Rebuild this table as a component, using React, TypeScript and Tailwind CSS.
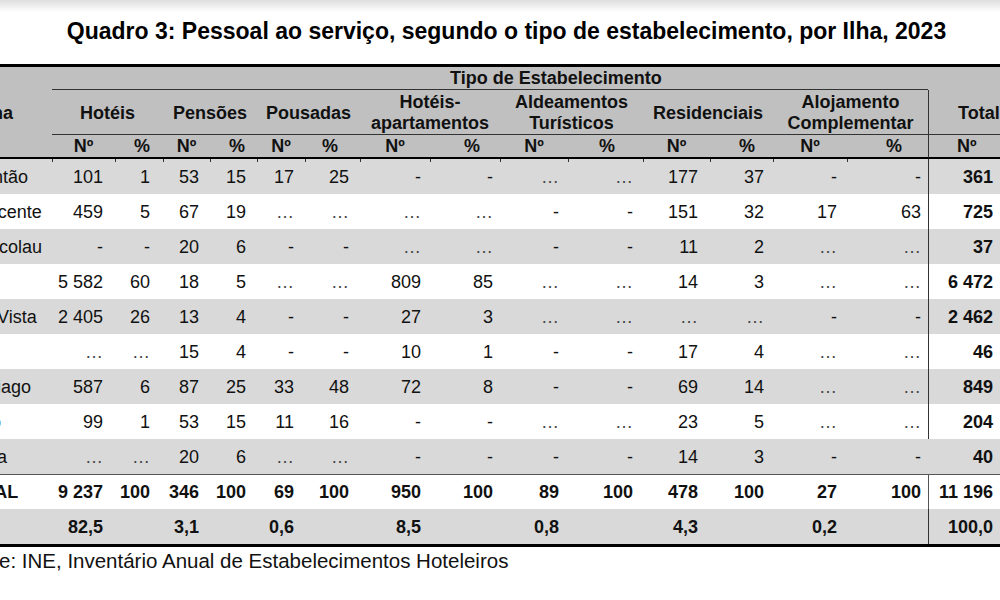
import React from 'react';

// column padding for data cells (right aligned), one entry per column after "Ilha"
const dataPad = [
  'pr-[12px]', 'pr-[13px]', 'pr-[11px]', 'pr-[11px]', 'pr-[11px]', 'pr-[11px]', 'pr-[9px]',
  'pr-[7px]', 'pr-[9px]', 'pr-[10px]', 'pr-[12px]', 'pr-[9px]', 'pr-[10px]', 'pr-[7px]',
];

// "%" header cells sit a bit left of the figures under them
const pctPad = ['pr-[13px]', 'pr-[12px]', 'pr-[22px]', 'pr-[20px]', 'pr-[28px]', 'pr-[18px]', 'pr-[26px]'];

const groups: { label: string; two?: boolean }[] = [
  { label: 'Hotéis' },
  { label: 'Pensões' },
  { label: 'Pousadas' },
  { label: 'Hotéis-\napartamentos', two: true },
  { label: 'Aldeamentos\nTurísticos', two: true },
  { label: 'Residenciais' },
  { label: 'Alojamento\nComplementar', two: true },
];

const E = '…';

const rows: { ilha: string; v: string[]; total: string }[] = [
  { ilha: 'S. Antão', v: ['101', '1', '53', '15', '17', '25', '-', '-', E, E, '177', '37', '-', '-'], total: '361' },
  { ilha: 'S. Vicente', v: ['459', '5', '67', '19', E, E, E, E, '-', '-', '151', '32', '17', '63'], total: '725' },
  { ilha: 'S. Nicolau', v: ['-', '-', '20', '6', '-', '-', E, E, '-', '-', '11', '2', E, E], total: '37' },
  { ilha: 'Sal', v: ['5 582', '60', '18', '5', E, E, '809', '85', E, E, '14', '3', E, E], total: '6 472' },
  { ilha: 'Boa Vista', v: ['2 405', '26', '13', '4', '-', '-', '27', '3', E, E, E, E, '-', '-'], total: '2 462' },
  { ilha: 'Maio', v: [E, E, '15', '4', '-', '-', '10', '1', '-', '-', '17', '4', E, E], total: '46' },
  { ilha: 'Santiago', v: ['587', '6', '87', '25', '33', '48', '72', '8', '-', '-', '69', '14', E, E], total: '849' },
  { ilha: 'Fogo', v: ['99', '1', '53', '15', '11', '16', '-', '-', E, E, '23', '5', E, E], total: '204' },
  { ilha: 'Brava', v: [E, E, '20', '6', E, E, '-', '-', '-', '-', '14', '3', '-', '-'], total: '40' },
];

const totalRow = ['9 237', '100', '346', '100', '69', '100', '950', '100', '89', '100', '478', '100', '27', '100'];
const pctRow = ['82,5', '', '3,1', '', '0,6', '', '8,5', '', '0,8', '', '4,3', '', '0,2', ''];

const Tick = () => <span className="absolute left-0 top-0 h-[3px] w-px bg-[#333]" />;

const BodyRow: React.FC<{ ilha: string; v: string[]; total: string; gray?: boolean; bold?: boolean; noRule?: boolean; top?: boolean; ticks?: boolean }> =
  ({ ilha, v, total, gray, bold, noRule, top, ticks }) => {
    const base = `relative h-[35px] ${gray ? 'bg-[#d9d9d9]' : 'bg-white'} ${bold ? 'font-bold' : ''} ${top ? 'border-t border-[#555]' : ''}`;
    return (
      <>
        <div className={`${base} flex items-center pl-[5px] whitespace-nowrap`}>{ilha}</div>
        {v.map((x, i) => (
          <div key={i} className={`${base} ${dataPad[i]} flex items-center justify-end whitespace-nowrap ${x === E ? 'text-[#444]' : ''}`}>
            {ticks && <Tick />}
            {x}
          </div>
        ))}
        <div className={`${base} pr-[37px] font-bold flex items-center justify-end whitespace-nowrap ${noRule ? 'border-l border-transparent' : 'border-l border-[#333]'}`}>
          {total}
        </div>
      </>
    );
  };

export default function App() {
  return (
    <div className="w-[1000px] h-[600px] overflow-hidden bg-white text-[#111] font-['Liberation_Sans',Arial,sans-serif]">
      <div className="h-[12px] bg-linear-to-b from-[#dedede] to-white" />

      <h1 className="mt-[5px] pl-[13px] text-center text-[23px] leading-[28px] font-bold text-black">
        Quadro 3: Pessoal ao serviço, segundo o tipo de estabelecimento, por Ilha, 2023
      </h1>

      {/* Table */}
      <div className="ml-[-45px] mt-[19px] w-[1075px] text-[18px] leading-[20px]">
        <div className="grid grid-cols-[97px_63px_48px_47px_47px_48px_55px_70px_70px_68px_75px_67px_63px_74px_81px_102px] border-t-[3px] border-black">
          {/* header row 1 */}
          <div className="row-span-3 bg-[#c0c0c0] border-b-2 border-black font-bold flex items-center pl-[27px] pt-[2px]">Ilha</div>
          <div className="col-span-14 h-[23px] bg-[#c0c0c0] border-b border-[#333] font-bold flex items-center pl-[398px] whitespace-nowrap">
            Tipo de Estabelecimento
          </div>
          <div className="h-[23px] bg-[#c0c0c0]" />

          {/* header row 2 */}
          {groups.map(g => (
            <div key={g.label}
              className={`col-span-2 h-[45px] bg-[#c0c0c0] border-b border-[#333] font-bold flex items-center justify-center text-center whitespace-pre-line ${g.two ? 'leading-[21px] pt-[1px]' : 'pt-[1px]'}`}>
              {g.label}
            </div>
          ))}
          <div className="h-[45px] bg-[#c0c0c0] border-b border-l border-[#333] font-bold flex items-center pl-[29px] pt-[1px]">Total</div>

          {/* header row 3 */}
          {groups.map((g, i) => (
            <React.Fragment key={g.label}>
              <div className="h-[24px] bg-[#c0c0c0] border-b-2 border-black font-bold flex items-center justify-center">Nº</div>
              <div className={`h-[24px] bg-[#c0c0c0] border-b-2 border-black font-bold flex items-center justify-end ${pctPad[i]}`}>%</div>
            </React.Fragment>
          ))}
          <div className="h-[24px] bg-[#c0c0c0] border-b-2 border-l border-b-black border-l-[#333] font-bold flex items-center pl-[28px]">Nº</div>

          {/* body */}
          {rows.map((r, i) => (
            <BodyRow key={r.ilha} ilha={r.ilha} v={r.v} total={r.total} gray={i % 2 === 0}
              noRule={r.ilha === 'Brava'} ticks={i === 0} />
          ))}
          <BodyRow ilha="TOTAL" v={totalRow} total="11 196" bold top />
          <BodyRow ilha="%" v={pctRow} total="100,0" bold gray />
        </div>
        <div className="h-[3px] bg-black" />
      </div>

      <p className="ml-[-42px] mt-[2px] text-[20.5px] leading-[24px] whitespace-nowrap">
        Fonte: INE, Inventário Anual de Estabelecimentos Hoteleiros
      </p>
    </div>
  );
}
